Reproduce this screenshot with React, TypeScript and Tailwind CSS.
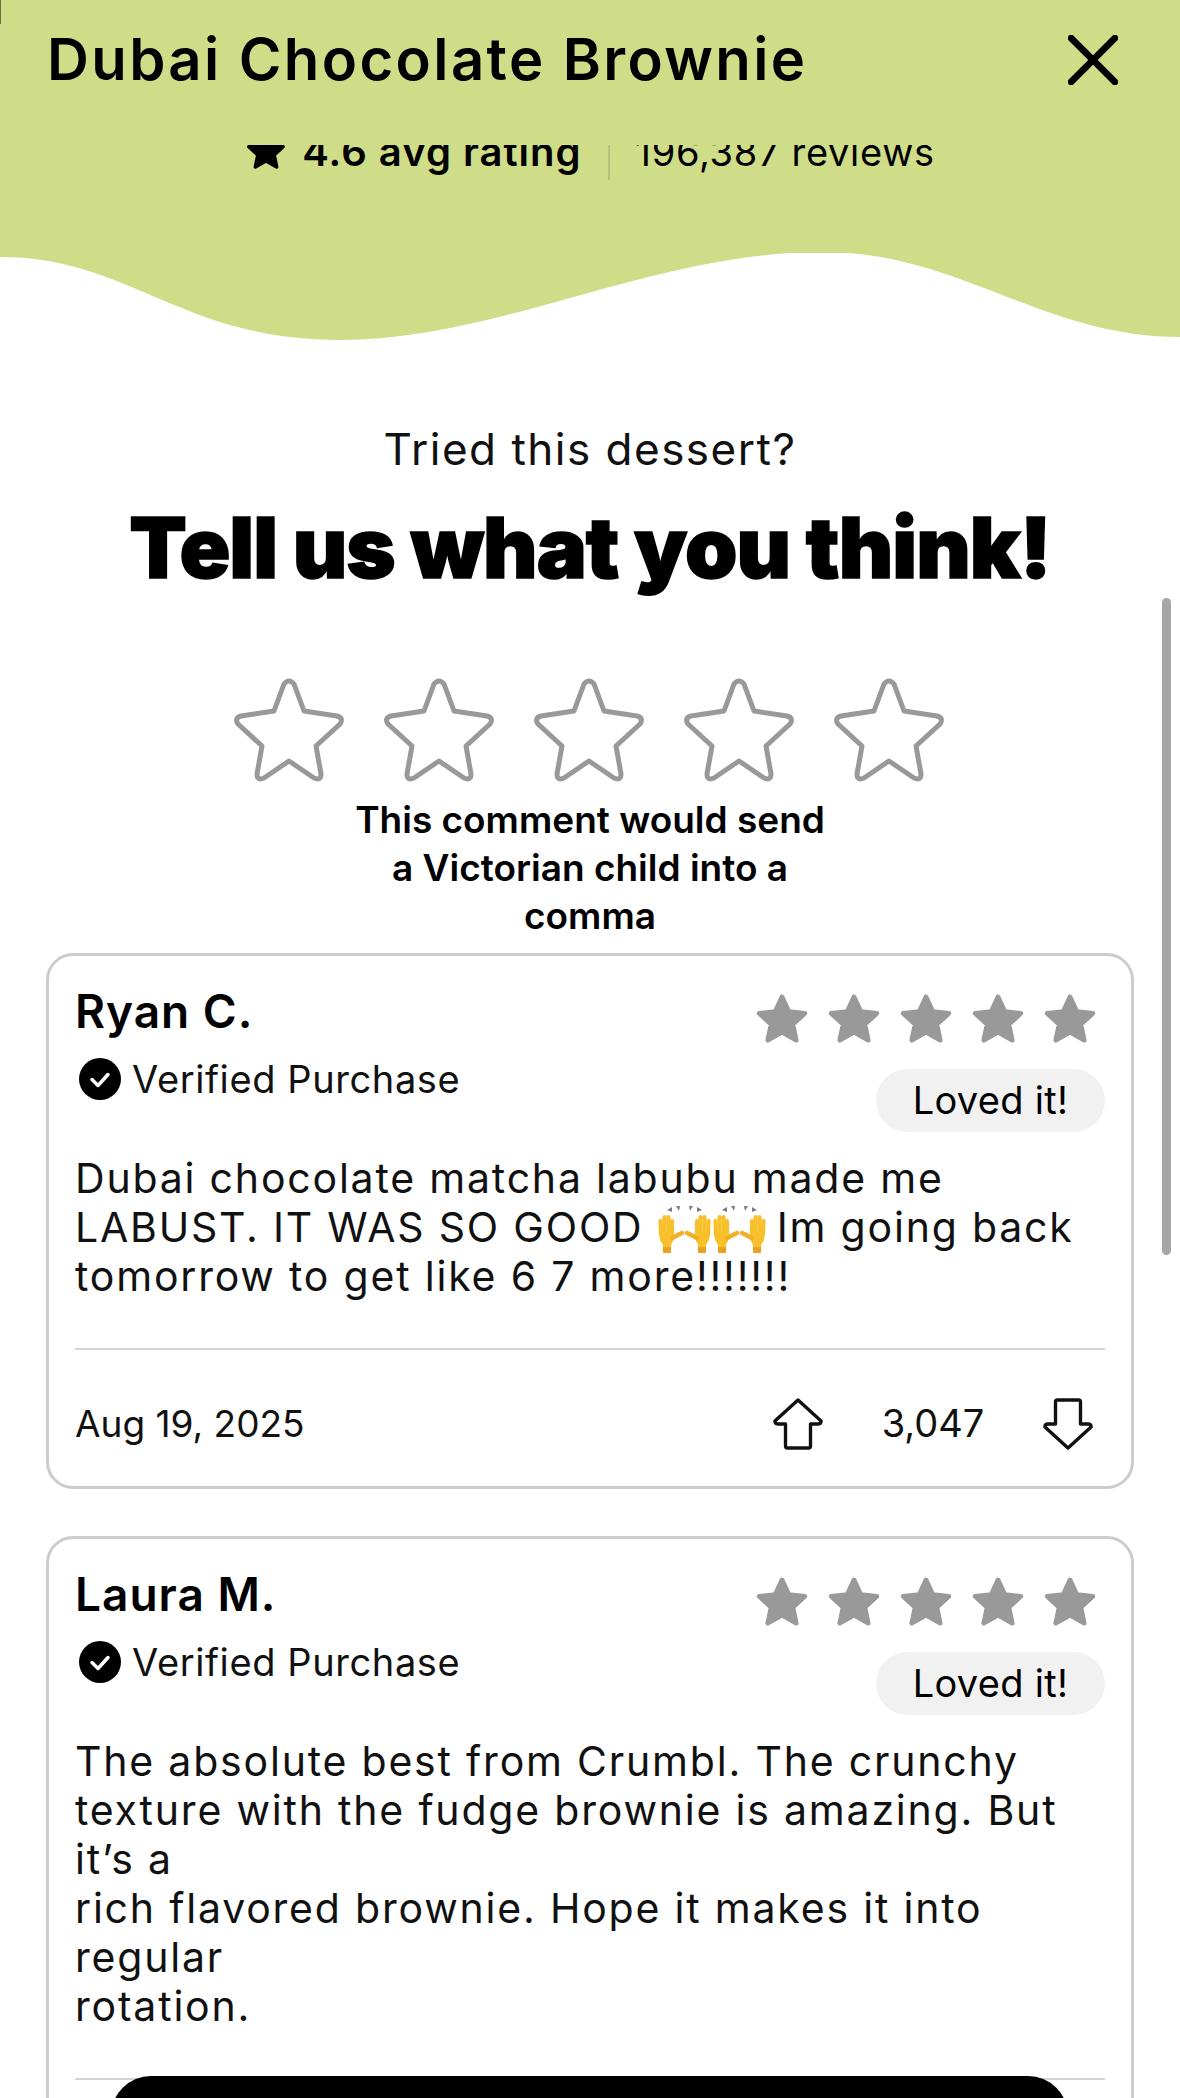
const sans = "font-['Inter',sans-serif]";

function Star({ className }: { className: string }) {
  return (
    <svg viewBox="0 0 24 24" className={className} fill="currentColor" stroke="currentColor" strokeWidth="2" strokeLinejoin="round">
      <path d="M12 2.500l2.900 6.300 6.900.8-5.100 4.700 1.400 6.800-6.100-3.400-6.100 3.400 1.400-6.800L2.200 9.600l6.900-.8z" />
    </svg>
  );
}

function OutlineStar() {
  return (
    <svg viewBox="0 0 112 104" className="w-[112px] h-[104px] text-[#999]" fill="none" stroke="currentColor" strokeWidth="5" strokeLinejoin="round">
      <path d="M51 6 Q56 0 61 6 L71 33 L104 38 Q111 40 107 46 L83 68 L88 96 Q88 103 81 100 L56 83 L31 100 Q24 103 24 96 L29 68 L5 46 Q1 40 8 38 L41 33 Z" />
    </svg>
  );
}

function Hand() {
  return (
    <g>
      <g stroke="#f8c12c" strokeWidth="4.200" strokeLinecap="round">
        <line x1="3.500" y1="16" x2="4" y2="30" />
        <line x1="7.500" y1="12" x2="7.500" y2="30" />
        <line x1="11.500" y1="12" x2="11.500" y2="30" />
        <line x1="15" y1="16" x2="15" y2="30" />
      </g>
      <path d="M2 26 L17 26 L17 34 L14 40 L14 48 L6 48 L6 40 L3 35 Z" fill="#f8c12c" />
      <path d="M6 42 L14 42 L14 48 L6 48 Z" fill="#e9a21f" />
      <line x1="15" y1="33" x2="25" y2="28" stroke="#f3b024" strokeWidth="4.500" strokeLinecap="round" />
      <path d="M10 5 L15 2 L15 7 Z M19 1 L23 1 L22 6 Z" fill="#7d7d7d" />
    </g>
  );
}

function Emoji() {
  return (
    <svg viewBox="0 0 55 50" className="w-[55px] h-[50px] inline-block align-[-7px] -my-[6px]">
      <Hand />
      <g transform="translate(55 0) scale(-1 1)">
        <Hand />
      </g>
    </svg>
  );
}

function Arrow({ down }: { down?: boolean }) {
  return (
    <svg viewBox="0 0 52 54" className={"w-[50px] h-[54px] " + (down ? "rotate-180" : "")} fill="none" stroke="#111" strokeWidth="3.500" strokeLinejoin="round">
      <path d="M26 2 L50 24 Q50 27 47 27 L39 27 L39 50 Q39 52 37 52 L15 52 Q13 52 13 50 L13 27 L5 27 Q2 27 2 24 Z" />
    </svg>
  );
}

function Review({ name, lines, date, votes }: { name: string; lines: React.ReactNode; date: string; votes: string }) {
  return (
    <div className="border-[3px] border-[#ccc] rounded-[27px] mx-[46px] w-[1088px] px-[26px] pt-[28px] pb-[20px] bg-white shrink-0">
      <div className="flex justify-between">
        <div>
          <div className="text-[46px] leading-[54px] font-semibold tracking-[1px] text-black">{name}</div>
          <div className="flex items-center gap-[11px] mt-[18px] ml-[4px]">
            <svg viewBox="0 0 42 42" className="w-[42px] h-[42px]">
              <circle cx="21" cy="21" r="21" fill="#000" />
              <path d="M13 21.500l6 6 10-11" fill="none" stroke="#fff" strokeWidth="3.500" strokeLinecap="round" strokeLinejoin="round" />
            </svg>
            <span className="text-[38px] leading-[46px] tracking-[0.6px] text-[#111]">Verified Purchase</span>
          </div>
        </div>
        <div className="flex flex-col items-end">
          <div className="flex gap-[16px] mr-[7px] mt-[7px]">
            {[0, 1, 2, 3, 4].map((i) => (
              <Star key={i} className="w-[56px] h-[56px] text-[#999]" />
            ))}
          </div>
          <div className="bg-[#f1f1f1] rounded-full h-[63px] w-[229px] flex items-center justify-center text-[38px] tracking-[0.3px] text-black mt-[22px]">Loved it!</div>
        </div>
      </div>
      <div className="text-[41px] leading-[49px] tracking-[1.8px] text-[#111] mt-[22px]">{lines}</div>
      <div className="border-t-2 border-[#d4d4d4] mt-[47px]" />
      <div className="flex items-center justify-between pt-[45px] pb-[14px]">
        <span className="text-[37px] text-[#111]">{date}</span>
        <div className="flex items-center mr-[12px]">
          <Arrow />
          <span className="text-[38px] text-[#111] w-[220px] text-center">{votes}</span>
          <Arrow down />
        </div>
      </div>
    </div>
  );
}

export default function App() {
  return (
    <div className={"relative w-[1180px] h-[2098px] overflow-hidden bg-white " + sans}>
      <div className="bg-[#cfdc88]">
        <div className="h-[145px] flex items-start justify-between pl-[47px] pr-[62px] pt-[26px]">
          <h1 className="text-[58px] leading-[66px] font-semibold tracking-[2.400px] text-black">Dubai Chocolate Brownie</h1>
          <svg viewBox="0 0 48 48" className="w-[50px] h-[50px] mt-[9px]" fill="none" stroke="#000" strokeWidth="6.500" strokeLinecap="round">
            <path d="M3 3 L45 45 M45 3 L3 45" />
          </svg>
        </div>
        <div className="h-[108px] overflow-hidden">
          <div className="flex justify-center items-center -mt-[21px] text-[38px] leading-[52px] text-black">
            <Star className="w-[42px] h-[42px] -mt-[3px]" />
            <span className="font-semibold text-[40px] tracking-[1px] ml-[15px]">4.6 avg rating</span>
            <span className="w-[2px] h-[40px] bg-[#b6c278] mx-[26px] mt-[16px]" />
            <span className="tracking-[0.7px]">196,387 reviews</span>
          </div>
        </div>
      </div>
      <svg viewBox="0 0 1180 90" preserveAspectRatio="none" className="block w-[1180px] h-[90px]">
        <rect width="1180" height="90" fill="#fff" />
        <path d="M0 0 L1180 0 L1180 84 C1040 84 960 -2 820 -1 C650 0 500 87 340 87 C180 87 130 4 0 4 Z" fill="#cfdc88" />
      </svg>
      <div className="text-center text-[44px] leading-[54px] tracking-[1.500px] text-[#111] mt-[79px]">Tried this dessert?</div>
      <div className="text-center text-[84px] leading-[100px] font-black text-black mt-[22px] tracking-[-1px] [-webkit-text-stroke:1.5px_black]">Tell us what you think!</div>
      <div className="flex justify-center gap-[38px] mt-[80px] ml-[-2px]">
        {[0, 1, 2, 3, 4].map((i) => (
          <OutlineStar key={i} />
        ))}
      </div>
      <div className="text-center text-[37px] leading-[48px] font-semibold text-black mt-[14px]">
        This comment would send
        <br />a Victorian child into a
        <br />comma
      </div>
      <div className="flex flex-col gap-[47px] mt-[13px]">
        <Review
          name="Ryan C."
          date="Aug 19, 2025"
          votes="3,047"
          lines={
            <>
              Dubai chocolate matcha labubu made me
              <br />
              LABUST. IT WAS SO GOOD <Emoji /><Emoji /><span className="ml-[10px]">Im going back</span>
              <br />
              tomorrow to get like 6 7 more!!!!!!!
            </>
          }
        />
        <Review
          name="Laura M."
          date="Aug 17, 2025"
          votes="1,115"
          lines={
            <>
              The absolute best from Crumbl. The crunchy
              <br />
              texture with the fudge brownie is amazing. But it’s a
              <br />
              rich flavored brownie. Hope it makes it into regular
              <br />
              rotation.
            </>
          }
        />
      </div>
      <div className="absolute right-[9px] top-[598px] w-[9px] h-[657px] rounded-full bg-[#a6a6a6]" />
      <div className="absolute left-0 top-0 w-[1px] h-[24px] bg-[#6a7040]" />
      <div className="absolute left-[111px] top-[2076px] w-[957px] h-[40px] rounded-t-[44px] bg-black" />
    </div>
  );
}
